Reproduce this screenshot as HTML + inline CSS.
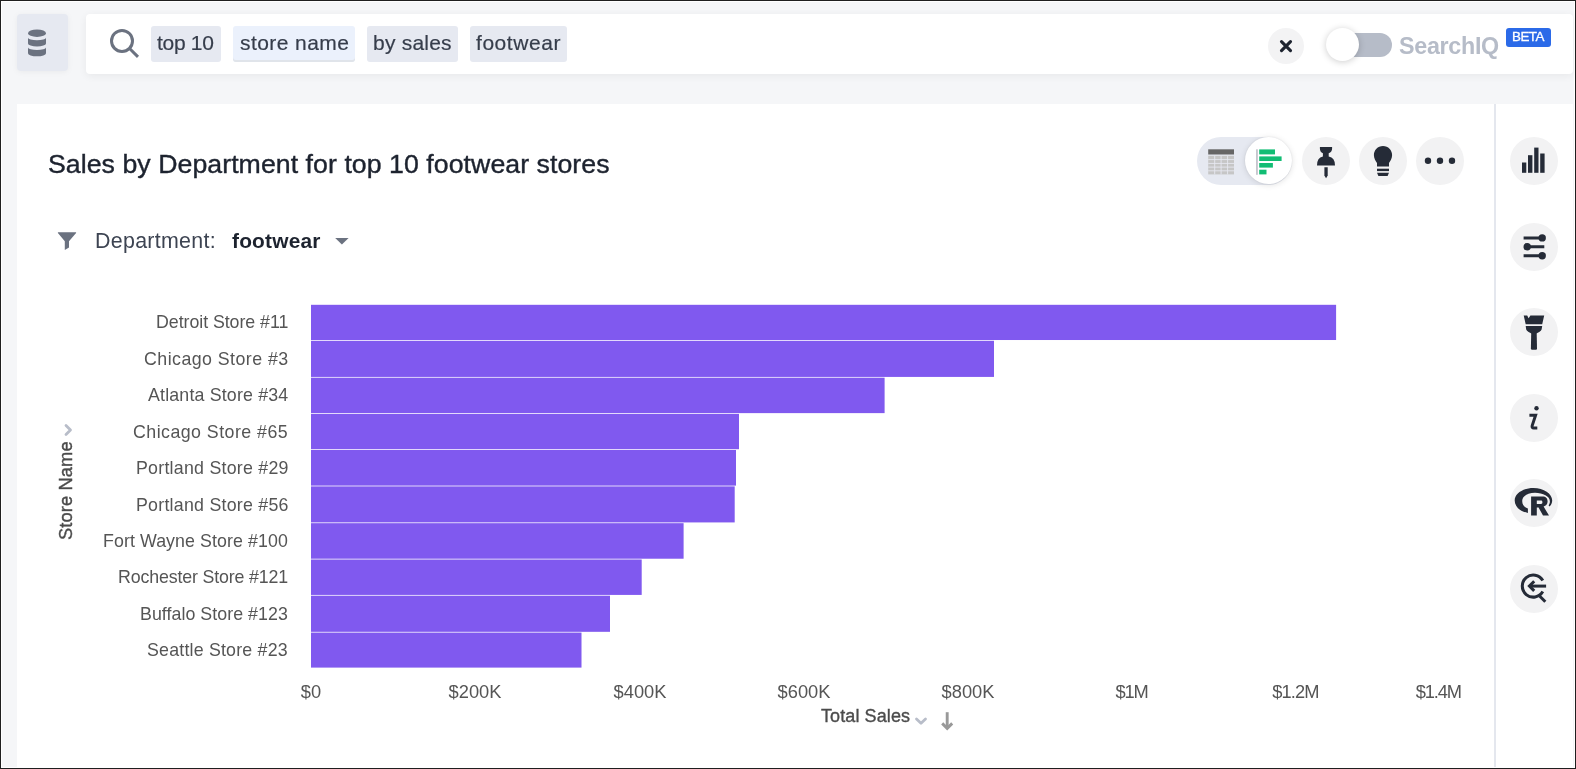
<!DOCTYPE html>
<html>
<head>
<meta charset="utf-8">
<style>
html,body{margin:0;padding:0;}
body{width:1576px;height:769px;position:relative;overflow:hidden;background:#fff;font-family:"Liberation Sans",sans-serif;}
.a{position:absolute;}
.t{position:absolute;white-space:pre;line-height:1;will-change:transform;}
#frame{left:0;top:0;width:1576px;height:769px;box-sizing:border-box;border:1px solid #1f1f1f;}
#bg{left:2px;top:2px;width:1572px;height:765px;background:#f5f6f8;}
#db{left:17px;top:14px;width:51px;height:57px;border-radius:4px;background:#e6e9f1;box-shadow:0 1px 6px rgba(0,0,0,.05);}
#bar{left:86px;top:14px;width:1487px;height:60px;border-radius:4px;background:#fff;box-shadow:0 2px 8px rgba(0,0,0,.06);}
.tok{position:absolute;top:26px;height:36px;border-radius:3px;background:#e6e9f1;}
.tokt{font-size:21px;color:#363d4b;top:32.2px;-webkit-text-stroke:0.2px #363d4b;}
#card{left:17px;top:104px;width:1556px;height:663px;background:#fff;}
#div{left:1494px;top:104px;width:2px;height:663px;background:#e4e7ee;}
.circ{position:absolute;width:48px;height:48px;border-radius:50%;background:#f2f2f3;}
</style>
</head>
<body>
<div id="frame" class="a"></div>
<div id="bg" class="a"></div>

<!-- top bar -->
<div id="db" class="a"></div>
<div id="bar" class="a"></div>
<div class="tok" style="left:151px;width:70px"></div>
<div class="tok" style="left:233px;width:122px;background:#ebf1fc;box-shadow:inset 0 -2px 0 #e0e4ea"></div>
<div class="tok" style="left:367px;width:91px"></div>
<div class="tok" style="left:470px;width:97px"></div>
<div class="t tokt" style="left:157px;letter-spacing:-0.3px">top 10</div>
<div class="t tokt" style="left:239.5px;letter-spacing:0.42px">store name</div>
<div class="t tokt" style="left:372.8px;letter-spacing:0.22px">by sales</div>
<div class="t tokt" style="left:476px;letter-spacing:0.55px">footwear</div>

<div class="a" style="left:1268px;top:27.8px;width:36px;height:36px;border-radius:50%;background:#f3f3f4"></div>
<div class="a" style="left:1332px;top:33px;width:60px;height:24px;border-radius:12px;background:#b6bcc8"></div>
<div class="a" style="left:1326px;top:28px;width:33px;height:33px;border-radius:50%;background:#fff;box-shadow:0 1px 7px rgba(0,0,0,.2)"></div>
<div class="t" style="left:1398.6px;top:34.5px;font-size:23.3px;font-weight:bold;color:#b6bcc8;letter-spacing:-0.3px">SearchIQ</div>
<div class="a" style="left:1506px;top:28px;width:45px;height:19px;border-radius:3px;background:#2b6ae8"></div>
<div class="t" style="left:1512px;top:29.8px;font-size:13.4px;color:#fff;letter-spacing:-0.55px;-webkit-text-stroke:0.3px #fff">BETA</div>

<svg class="a" style="left:0;top:0" width="1576" height="769" viewBox="0 0 1576 769">
  <!-- db icon -->
  <g fill="#6b7280">
    <ellipse cx="37" cy="33.2" rx="9" ry="3.7"/>
    <path d="M28,37.8 A9,2.4 0 0 0 46,37.8 V43.5 A9,3 0 0 1 28,43.5 Z"/>
    <path d="M28,47.5 A9,2.4 0 0 0 46,47.5 V53.3 A9,3 0 0 1 28,53.3 Z"/>
  </g>
  <!-- search icon -->
  <g stroke="#6b7280" stroke-width="3" fill="none">
    <circle cx="122" cy="40.9" r="10.5"/>
    <path d="M129.8,48.7 L138,56.9"/>
  </g>
  <!-- close x -->
  <g stroke="#1d232f" stroke-width="3.1" fill="none" stroke-linecap="round">
    <path d="M1281.5,41.6 L1290.5,50.6 M1290.5,41.6 L1281.5,50.6"/>
  </g>
</svg>

<!-- card -->
<div id="card" class="a"></div>
<div id="div" class="a"></div>
<div class="t" style="left:47.6px;top:151.4px;font-size:26.7px;letter-spacing:0.05px;color:#1d232f;-webkit-text-stroke:0.4px #1d232f">Sales by Department for top 10 footwear stores</div>

<!-- action buttons -->
<div class="a" style="left:1197px;top:137px;width:95px;height:47.5px;border-radius:24px;background:#e6e9f1"></div>
<div class="a" style="left:1245px;top:137px;width:47px;height:47px;border-radius:50%;background:#fff;box-shadow:0 1px 6px rgba(0,0,0,.12),0 0 0 1px rgba(0,0,0,.025)"></div>
<div class="circ" style="left:1302px;top:137px"></div>
<div class="circ" style="left:1359px;top:137px"></div>
<div class="circ" style="left:1416px;top:137px"></div>

<!-- right panel -->
<div class="circ" style="left:1510px;top:137px"></div>
<div class="circ" style="left:1510px;top:223px"></div>
<div class="circ" style="left:1510px;top:308px"></div>
<div class="circ" style="left:1510px;top:394px"></div>
<div class="circ" style="left:1510px;top:479px"></div>
<div class="circ" style="left:1510px;top:565px"></div>

<!-- filter row -->
<div class="t" style="left:94.5px;top:230.9px;font-size:21.4px;color:#3d4452;letter-spacing:0.3px">Department:</div>
<div class="t" style="left:231.5px;top:230.8px;font-size:20.9px;font-weight:bold;color:#1d232f;letter-spacing:0.2px">footwear</div>

<!-- chart labels -->
<style>
.yl{right:1287.9px;font-size:17.8px;color:#555;text-align:right;}
.xl{top:682.5px;width:200px;text-align:center;font-size:18.3px;color:#555;}
</style>
<div class="t yl" style="top:314.4px;letter-spacing:-0.051px;margin-right:0.051px">Detroit Store #11</div>
<div class="t yl" style="top:350.8px;letter-spacing:0.454px;margin-right:-0.454px">Chicago Store #3</div>
<div class="t yl" style="top:387.2px;letter-spacing:0.175px;margin-right:-0.175px">Atlanta Store #34</div>
<div class="t yl" style="top:423.7px;letter-spacing:0.462px;margin-right:-0.462px">Chicago Store #65</div>
<div class="t yl" style="top:460.1px;letter-spacing:0.247px;margin-right:-0.247px">Portland Store #29</div>
<div class="t yl" style="top:496.5px;letter-spacing:0.247px;margin-right:-0.247px">Portland Store #56</div>
<div class="t yl" style="top:532.9px;letter-spacing:0.080px;margin-right:-0.080px">Fort Wayne Store #100</div>
<div class="t yl" style="top:569.3px;letter-spacing:-0.147px;margin-right:0.147px">Rochester Store #121</div>
<div class="t yl" style="top:605.8px;letter-spacing:0.047px;margin-right:-0.047px">Buffalo Store #123</div>
<div class="t yl" style="top:642.2px;letter-spacing:0.200px;margin-right:-0.200px">Seattle Store #23</div>
<div class="t xl" style="left:211.0px">$0</div>
<div class="t xl" style="left:375.3px">$200K</div>
<div class="t xl" style="left:539.6px">$400K</div>
<div class="t xl" style="left:703.9px">$600K</div>
<div class="t xl" style="left:868.2px">$800K</div>
<div class="t xl" style="left:1031px;letter-spacing:-1.1px;text-indent:1.1px">$1M</div>
<div class="t xl" style="left:1195.2px;letter-spacing:-0.9px;text-indent:0.9px">$1.2M</div>
<div class="t xl" style="left:1260px;width:200px;text-align:right;letter-spacing:-1.1px;margin-left:1px">$1.4M</div>
<div class="t" style="left:821px;top:706.6px;font-size:18px;letter-spacing:0.1px;color:#4b4b4b;-webkit-text-stroke:0.35px #4b4b4b">Total Sales</div>
<div class="t" style="left:57.2px;top:539.8px;font-size:18.3px;letter-spacing:0.12px;color:#4b4b4b;-webkit-text-stroke:0.35px #4b4b4b;transform-origin:0 0;transform:rotate(-90deg)">Store Name</div>

<svg class="a" style="left:0;top:0" width="1576" height="769" viewBox="0 0 1576 769" id="icons">
  <g fill="#8059ef">
<rect x="311" y="304.80" width="1025.1" height="35.22"/>
<rect x="311" y="340.78" width="683.0" height="36.14"/>
<rect x="311" y="377.68" width="573.6" height="35.44"/>
<rect x="311" y="413.88" width="428.0" height="35.34"/>
<rect x="311" y="449.98" width="425.0" height="35.64"/>
<rect x="311" y="486.38" width="423.7" height="36.04"/>
<rect x="311" y="523.18" width="372.6" height="35.54"/>
<rect x="311" y="559.48" width="330.7" height="35.44"/>
<rect x="311" y="595.68" width="299.0" height="36.14"/>
<rect x="311" y="632.58" width="270.5" height="35.02"/>
  </g>
  <!-- axis title chevrons/arrow -->
  <g fill="none" stroke="#b8bdc9" stroke-width="2.8" stroke-linecap="round" stroke-linejoin="round">
    <path d="M916.5,719 L921,723.3 L925.5,719"/>
    <path d="M66,425.5 L70.5,430 L66,434.5"/>
  </g>
  <g fill="none" stroke="#999" stroke-width="2.9">
    <path d="M947.2,712.2 V727.5"/>
    <path d="M942.2,723.4 L947.2,728.4 L952.2,723.4"/>
  </g>
  <!-- filter icon -->
  <path fill="#6b7280" d="M57.9,232.3 H76.1 V233 L69,241.2 V247.6 L64.8,250 V241.2 L57.9,233 Z"/>
  <path fill="#6b7280" d="M335.2,238 H348.6 L341.9,244.6 Z"/>
  <!-- table icon -->
  <g>
    <rect x="1208.2" y="149.3" width="25.8" height="5.2" fill="#666"/>
    <g fill="#c6c6c6">
      <rect x="1208.2" y="155.8" width="25.8" height="18.6"/>
    </g>
    <g stroke="#e6e9f1" stroke-width="0.9">
      <path d="M1214.7,155.8 V174.4 M1221.1,155.8 V174.4 M1227.6,155.8 V174.4 M1208.2,159.6 H1234 M1208.2,163.4 H1234 M1208.2,167.1 H1234 M1208.2,170.8 H1234"/>
    </g>
  </g>
  <!-- bar icon -->
  <rect x="1256.2" y="149.3" width="1.5" height="25.5" fill="#b8b8c2"/>
  <g fill="#12bd74">
    <rect x="1259.2" y="149.4" width="15.8" height="5"/>
    <rect x="1259.2" y="156.4" width="22.4" height="4.6"/>
    <rect x="1259.2" y="163" width="13.7" height="4.6"/>
    <rect x="1259.2" y="169.7" width="7.3" height="4.7"/>
  </g>
  <g fill="#252b37">
    <!-- pin -->
    <path d="M1319.9,146.9 H1332.1 V148.4 Q1332.1,151.8 1328.7,153.2 V156.6 Q1335,157.9 1335,165.4 H1317 Q1317,157.9 1322.9,156.6 V153.2 Q1319.9,151.8 1319.9,148.4 Z"/>
    <path d="M1324.4,167.2 H1327.7 V175.4 L1326.05,178.2 L1324.4,175.4 Z"/>
    <!-- bulb -->
    <path d="M1383,146 C1388.3,146 1392.1,150.2 1392.1,155.2 C1392.1,158.6 1390.2,161 1389,163 V166.6 H1377 V163 C1375.8,161 1373.9,158.6 1373.9,155.2 C1373.9,150.2 1377.7,146 1383,146 Z"/>
    <path d="M1377,168.7 H1389 V171.1 H1377 Z"/>
    <path d="M1377,172.8 H1389 L1387.6,176 H1378.4 Z"/>
    <!-- dots -->
    <circle cx="1428" cy="160.8" r="3.2"/>
    <circle cx="1440" cy="160.8" r="3.2"/>
    <circle cx="1452" cy="160.8" r="3.2"/>
    <!-- right panel: bar chart -->
    <rect x="1522" y="162.5" width="4.3" height="10.3"/>
    <rect x="1528" y="155.2" width="4.4" height="17.6"/>
    <rect x="1534.2" y="147.6" width="4.3" height="25.2"/>
    <rect x="1540.2" y="153.5" width="4.4" height="19.3"/>
    <!-- sliders knobs -->
    <circle cx="1542.2" cy="237.9" r="3.7"/>
    <circle cx="1527.2" cy="246.8" r="3.7"/>
    <circle cx="1542.2" cy="255.8" r="3.7"/>
    <!-- brush -->
    <path d="M1523.7,315.6 H1527.2 L1528.6,318.3 L1530.4,315.6 H1544.2 L1542.2,324.2 H1525.7 Z"/>
    <path d="M1525.7,326.1 H1542.2 L1541.6,329.6 Q1541.2,331 1539.2,332 L1536.4,333.4 H1531.4 L1528.6,332 Q1526.6,331 1526.2,329.6 Z"/>
    <path d="M1531.2,333 H1536.7 L1537,348.6 Q1537,349.8 1535.9,349.8 H1532.1 Q1530.9,349.8 1530.9,348.6 Z"/>
    <!-- info dot -->
    <circle cx="1536.5" cy="408.2" r="2.2"/>
    <!-- R logo -->
    <path fill-rule="evenodd" d="M1533.45,487.9 C1543.8,487.9 1552.2,493.5 1552.2,500.4 C1552.2,503 1551,505 1549.4,506.6 L1548.6,505.3 C1549.4,504 1549.9,502.8 1549.9,501.4 C1549.9,496.3 1543,492.8 1535,492.8 C1527.8,492.8 1522.2,496.4 1522.2,501 C1522.2,504.8 1524.5,507.4 1527.9,508.6 V512.9 C1520,511.5 1514.7,506.5 1514.7,500.4 C1514.7,493.5 1523.1,487.9 1533.45,487.9 Z"/>
    <path fill-rule="evenodd" d="M1531.1,496.5 H1542.5 C1546,496.5 1547.6,498.6 1547.6,501.4 C1547.6,504 1546,505.6 1543.6,506.6 L1549,515.4 H1543 L1538.6,507.6 H1536.8 V515.4 H1531.1 Z M1536.8,500.6 V504 H1541 C1542,504 1542.4,503.3 1542.4,502.3 C1542.4,501.3 1542,500.6 1541,500.6 Z"/>
  </g>
  <g fill="none" stroke="#252b37" stroke-width="3">
    <!-- sliders lines -->
    <path d="M1523.6,237.9 H1542 M1527.2,246.8 H1544.3 M1523.6,255.8 H1542"/>
    <!-- info stem -->
    <path d="M1529.4,415.2 H1535.6 L1532.2,425.6 Q1531.6,427.9 1533.8,427.9 H1537.3" stroke-linejoin="miter"/>
    <!-- search arrow -->
    <path d="M1542.8,580.6 A11,11 0 1 0 1542.8,591.6"/>
    <path d="M1529.5,586.1 H1546.1"/>
    <path d="M1534.2,581.3 L1529.4,586.1 L1534.2,590.9"/>
    <path d="M1539.6,596 L1545.3,601.7"/>
  </g>
</svg>
</body>
</html>
